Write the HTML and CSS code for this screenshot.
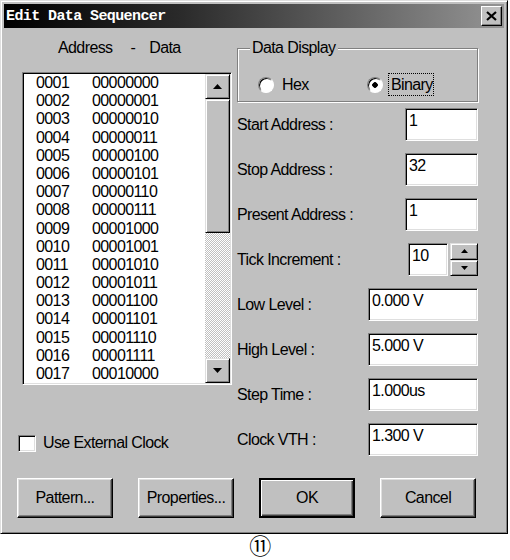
FILE: index.html
```html
<!DOCTYPE html>
<html lang="en">
<head>
  <meta charset="UTF-8" />
  <title>Edit Data Sequencer</title>
  <link rel="stylesheet" href="styles.css">
</head>
<body>

  <div class="window">
    <div class="titlebar">
      <span class="title">Edit Data Sequencer</span>
      <button class="close">
        <svg width="11" height="10" viewBox="0 0 11 10"><path d="M1 1 L10 9 M10 1 L1 9" stroke="#000" stroke-width="2.2" fill="none"/></svg>
      </button>
    </div>

    <div class="main">
      <div class="left">
        <div class="list-head">
          <span>Address</span><span class="dash">-</span><span class="data-head">Data</span>
        </div>

        <div class="listbox">
          <div class="rows">
            <div class="row"><span class="addr">0001</span><span>00000000</span></div>
            <div class="row"><span class="addr">0002</span><span>00000001</span></div>
            <div class="row"><span class="addr">0003</span><span>00000010</span></div>
            <div class="row"><span class="addr">0004</span><span>00000011</span></div>
            <div class="row"><span class="addr">0005</span><span>00000100</span></div>
            <div class="row"><span class="addr">0006</span><span>00000101</span></div>
            <div class="row"><span class="addr">0007</span><span>00000110</span></div>
            <div class="row"><span class="addr">0008</span><span>00000111</span></div>
            <div class="row"><span class="addr">0009</span><span>00001000</span></div>
            <div class="row"><span class="addr">0010</span><span>00001001</span></div>
            <div class="row"><span class="addr">0011</span><span>00001010</span></div>
            <div class="row"><span class="addr">0012</span><span>00001011</span></div>
            <div class="row"><span class="addr">0013</span><span>00001100</span></div>
            <div class="row"><span class="addr">0014</span><span>00001101</span></div>
            <div class="row"><span class="addr">0015</span><span>00001110</span></div>
            <div class="row"><span class="addr">0016</span><span>00001111</span></div>
            <div class="row"><span class="addr">0017</span><span>00010000</span></div>
          </div>
          <div class="vscroll">
            <div class="raised sb-btn">
              <svg width="9" height="5" viewBox="0 0 9 5"><polygon points="4.5,0 9,5 0,5" fill="#000"/></svg>
            </div>
            <div class="raised sb-thumb"></div>
            <div class="sb-track"></div>
            <div class="raised sb-btn">
              <svg width="9" height="5" viewBox="0 0 9 5"><polygon points="0,0 9,0 4.5,5" fill="#000"/></svg>
            </div>
          </div>
        </div>

        <div class="check-row">
          <span class="checkbox"></span>
          <span>Use External Clock</span>
        </div>
      </div>

      <div class="right">
        <fieldset class="group">
          <legend>Data Display</legend>
          <div class="radios">
            <span class="radio-item first"><span class="radio"></span>Hex</span>
            <span class="radio-item"><span class="radio checked"></span><span class="focus">Binary</span></span>
          </div>
        </fieldset>

        <div class="fields">
          <div class="field"><span>Start Address :</span><span class="edit w-a">1</span></div>
          <div class="field"><span>Stop Address :</span><span class="edit w-a">32</span></div>
          <div class="field"><span>Present Address :</span><span class="edit w-a">1</span></div>
          <div class="field">
            <span>Tick Increment :</span>
            <span class="spin-wrap">
              <span class="edit w-t">10</span>
              <span class="spin">
                <span class="raised spin-btn">
                  <svg width="7" height="4" viewBox="0 0 7 4"><polygon points="3.5,0 7,4 0,4" fill="#000"/></svg>
                </span>
                <span class="raised spin-btn">
                  <svg width="7" height="4" viewBox="0 0 7 4"><polygon points="0,0 7,0 3.5,4" fill="#000"/></svg>
                </span>
              </span>
            </span>
          </div>
          <div class="field"><span>Low Level :</span><span class="edit w-b">0.000 V</span></div>
          <div class="field"><span>High Level :</span><span class="edit w-b">5.000 V</span></div>
          <div class="field"><span>Step Time :</span><span class="edit w-b">1.000us</span></div>
          <div class="field"><span>Clock VTH :</span><span class="edit w-b">1.300 V</span></div>
        </div>
      </div>
    </div>

    <div class="buttons">
      <button class="btn">Pattern...</button>
      <button class="btn">Properties...</button>
      <button class="btn default">OK</button>
      <button class="btn">Cancel</button>
    </div>
  </div>

  <div class="caption">⑪</div>

</body>
</html>
```

FILE: styles.css
```css
* {
  box-sizing: border-box;
}
body {
  margin: 0;
  background: #fff;
  font-family: "Liberation Sans", Arial, sans-serif;
  font-size: 16px;
  letter-spacing: -0.6px;
  color: #000;
}
.window {
  width: 508px;
  height: 534px;
  background: #c0c0c0;
  border: 1px solid;
  border-color: #dfdfdf #000 #000 #dfdfdf;
  box-shadow: inset 1px 1px 0 #fff, inset -1px -1px 0 #808080;
  padding: 3px;
}
.titlebar {
  height: 24px;
  display: flex;
  align-items: center;
  justify-content: space-between;
  padding: 0 2px;
  background: linear-gradient(90deg, #000 0%, #2a2a2a 35%, #949494 100%);
}
.title {
  font-family: "Liberation Mono", monospace;
  font-weight: bold;
  font-size: 15px;
  letter-spacing: -0.6px;
  color: #fff;
}
.close {
  width: 21px;
  height: 20px;
  padding: 0;
  display: flex;
  align-items: center;
  justify-content: center;
  background: #c0c0c0;
  border: 1px solid;
  border-color: #fff #000 #000 #fff;
  box-shadow: inset -1px -1px 0 #808080;
}

/* shared 3d look */
.raised {
  background: #c0c0c0;
  border: 1px solid;
  border-color: #dfdfdf #000 #000 #dfdfdf;
  box-shadow: inset 1px 1px 0 #fff, inset -1px -1px 0 #808080;
}

.main {
  display: flex;
}
.left {
  margin-left: 18px;
  width: 210px;
}
.list-head {
  display: flex;
  margin-top: 11px;
  height: 18px;
  line-height: 18px;
  padding-left: 36px;
}
.dash {
  margin-left: 18px;
}
.data-head {
  margin-left: 14px;
}
.listbox {
  display: flex;
  margin-top: 15px;
  height: 313px;
  padding: 1px;
  background: #fff;
  border: 1px solid;
  border-color: #808080 #fff #fff #808080;
  box-shadow: inset 1px 1px 0 #000, inset -1px -1px 0 #dfdfdf;
}
.rows {
  flex: 1;
}
.row {
  display: flex;
  height: 18.2px;
  line-height: 18.2px;
  padding-left: 12px;
}
.addr {
  width: 56px;
}
.vscroll {
  width: 25px;
  display: flex;
  flex-direction: column;
}
.sb-btn {
  height: 25px;
  display: flex;
  align-items: center;
  justify-content: center;
}
.sb-thumb {
  height: 134px;
}
.sb-track {
  flex: 1;
  background: repeating-conic-gradient(#c0c0c0 0 25%, #fff 0 50%) 0 0 / 2px 2px;
}
.check-row {
  display: flex;
  align-items: center;
  gap: 7px;
  margin-top: 49px;
  margin-left: -4px;
  height: 18px;
}
.checkbox {
  width: 18px;
  height: 17px;
  background: #fff;
  border: 1px solid;
  border-color: #808080 #fff #fff #808080;
  box-shadow: inset 1px 1px 0 #000, inset -1px -1px 0 #dfdfdf;
}

.right {
  margin-left: 5px;
  width: 241px;
}
.group {
  margin: 11px 0 0;
  padding: 0 0 5px;
  min-inline-size: auto;
  border: 1px solid #808080;
  box-shadow: inset 1px 1px 0 #fff, 1px 1px 0 #fff;
}
.group legend {
  margin-left: 12px;
  padding: 0 2px;
  line-height: 18px;
  background: #c0c0c0;
}
.radios {
  display: flex;
  align-items: center;
  height: 23px;
  margin-top: 16px;
  padding-left: 20px;
}
.radio-item {
  display: flex;
  align-items: center;
  gap: 8px;
}
.radio-item.first {
  width: 109px;
}
.radio {
  width: 16px;
  height: 16px;
  border-radius: 50%;
  background: #fff;
  border: 1px solid;
  border-color: #808080 #fff #fff #808080;
  box-shadow: inset 1px 1px 0 #000;
}
.radio.checked {
  background: radial-gradient(circle, #000 0 2.5px, #fff 3px);
}
.radio-item .focus {
  margin-left: -3px;
  height: 23px;
  line-height: 21px;
  padding: 0 0 0 2px;
  border: 1px dotted #000;
}

.fields {
  margin-top: 6px;
}
.field {
  display: flex;
  justify-content: space-between;
  align-items: center;
  height: 33px;
}
.field + .field {
  margin-top: 12px;
}
.edit {
  height: 33px;
  padding: 1px 3px 0;
  line-height: 22px;
  background: #fff;
  border: 1px solid;
  border-color: #808080 #fff #fff #808080;
  box-shadow: inset 1px 1px 0 #000, inset -1px -1px 0 #dfdfdf;
}
.w-a {
  width: 73px;
}
.w-b {
  width: 110px;
}
.w-t {
  width: 40px;
}
.spin-wrap {
  display: flex;
  gap: 2px;
}
.spin {
  display: flex;
  flex-direction: column;
  width: 28px;
  height: 33px;
}
.spin-btn {
  flex: 1;
  display: flex;
  align-items: center;
  justify-content: center;
}

.buttons {
  display: flex;
  gap: 25px;
  margin-top: 22px;
  padding-left: 13px;
}
.btn {
  width: 96px;
  height: 40px;
  padding: 0;
  font: inherit;
  letter-spacing: inherit;
  color: #000;
  background: #c0c0c0;
  border: 1px solid;
  border-color: #fff #000 #000 #fff;
  box-shadow: inset -1px -1px 0 #404040, inset 1px 1px 0 #dfdfdf, inset -2px -2px 0 #808080;
}
.btn.default {
  border: 2px solid #000;
  box-shadow: inset 1px 1px 0 #fff, inset -1px -1px 0 #404040, inset -2px -2px 0 #808080;
}

.caption {
  width: 520px;
  height: 26px;
  line-height: 25px;
  text-align: center;
  font-family: "DejaVu Serif", "Noto Sans CJK JP", serif;
  font-size: 22px;
}
```
